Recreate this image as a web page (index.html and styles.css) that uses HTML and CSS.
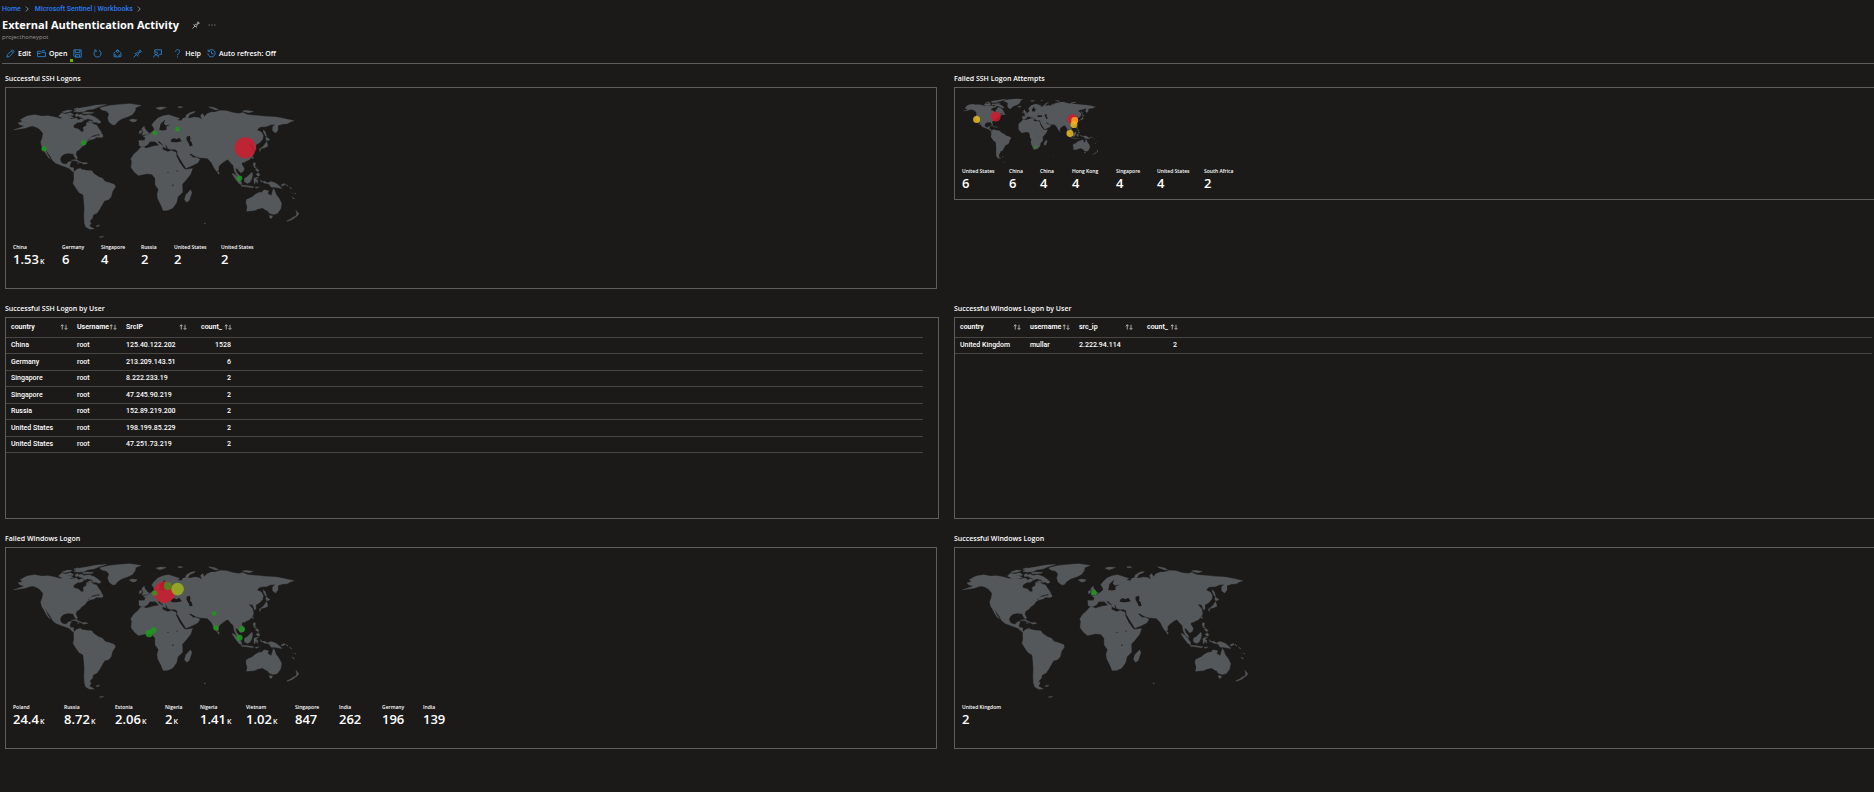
FILE: index.html
```html
<!DOCTYPE html>
<html lang="en">
<head>
<meta charset="utf-8">
<title>External Authentication Activity</title>
<link rel="stylesheet" href="styles.css">
</head>
<body>
<svg class="defs" aria-hidden="true">
  <symbol id="sort" viewBox="0 0 16 12">
    <path d="M4.500 11V1.500M1.500 4.500l3-3 3 3M12 1.500v9.500M9 8l3 3 3-3" fill="none" stroke="currentColor" stroke-width="1.600"/>
  </symbol>
  <symbol id="pin" viewBox="0 0 16 16">
    <path d="M1 15l5-5M3 7l6 6M4.500 8.500c1-1.500 2.500-2 4-1.500l3-3-.5-1.500 1-1L15 4.500l-1 1L12.500 5l-3 3c.5 1.500 0 3-1.500 4" fill="none" stroke="currentColor" stroke-width="1.500"/>
  </symbol>
  <symbol id="world" viewBox="40 50 860 410">
    <g class="land">
      <path d="M42 133L60 127 74 122 60 118 55 112 68 109 62 103 72 97 82 92 105 88 125 92 145 91 165 95 180 99 200 97 215 101 230 98 237 104 246 99 253 104 246 110 234 111 222 119 222 127 236 131 246 140 252 137 250 126 260 120 260 111 275 112 284 117 290 118 296 128 302 136 306 143 292 147 280 150 270 156 284 153 292 150 310 152 306 156 290 155 284 160 268 164 262 168 256 177 246 184 240 191 230 198 228 206 233 216 231 222 224 214 220 205 205 203 192 206 184 214 181 222 184 230 190 235 200 236 206 229 215 228 210 239 212 246 222 247 222 257 230 261 240 260 234 266 226 264 216 256 208 248 196 244 180 238 168 233 158 224 152 212 143 200 137 190 142 204 152 220 146 216 138 204 132 192 126 182 123 170 128 156 130 144 124 136 118 130 108 125 98 122 88 124 78 128 60 131z"/>
      <path d="M300 68L312 64 330 60 360 57 390 55 424 60 408 66 406 76 398 87 384 94 366 100 354 108 346 118 338 118 328 110 324 98 328 86 320 77 306 74z"/>
      <path d="M176 92l10-9 12 3 14-4 10 6-8 6 8 3-16 2-18-1zM186 80l18-6 14 1-8 4-16 3zM222 78l18-10 24-4 26-5 30-2-24 8-14 6-18 2-12 6-16 1zM232 90l12-4 8 4 16-2 16 6 12 8 8 8-6 4-10-4-6 2-4-8-14-4-10 4-8-6zM222 71l12-4 4 3-12 4zM248 82l14-2 20 1-6 3-26 1zM264 108l10-2 6 4-10 2zM296 142l12 4 2 8-10-2zM226 88l8-4 2 8-8 2z"/>
      <path d="M214 224l14-2 12 6 8 3-6 1-14-6zM246 232l14-1 4 3-14 2zM232 232l6 1-4 1zM388 104l10-3 14 2-4 5-10 2z"/>
      <path d="M222 266L226 256 232 251 242 248 246 252 264 255 276 256 282 264 296 274 308 278 316 288 330 292 344 297 347 304 338 318 334 334 327 342 314 346 308 356 300 370 292 382 280 388 278 398 270 406 274 413 269 422 284 430 270 431 258 424 254 412 253 390 254 370 252 340 250 328 238 321 229 308 220 294 223 280z"/>
      <path d="M290 420l10-1-4 4-6 0zM298 454l14-2-6 4zM612 412l5 1-2 3z"/>
      <path d="M428 184L440 188 460 182 476 180 489 182 488 192 504 199 514 195 528 200 532 214 540 230 552 246 558 252 578 249 572 266 558 284 547 296 548 320 534 334 530 352 518 368 504 374 490 375 484 360 474 340 472 326 476 312 466 298 466 278 456 266 440 265 416 270 404 260 394 246 396 228 393 220 402 206 414 196 422 186zM572 313l4 8-8 24-8 5-6-8 4-14z"/>
      <path d="M418 180L417 165 434 165 437 157 430 152 446 147 454 141 463 134 462 128 456 118 462 110 474 98 490 91 506 88 522 93 540 99 532 104 544 106 550 98 560 97 572 98 584 95 598 97 606 102 602 90 608 84 614 94 620 86 634 80 646 80 660 75 680 76 700 82 718 84 728 81 744 88 770 90 800 93 830 95 852 99 882 106 870 110 862 115 848 116 834 120 834 134 827 143 818 136 818 124 826 117 812 118 800 123 780 125 771 134 784 140 790 150 788 162 779 172 768 178 768 190 764 194 758 178 746 176 758 190 761 204 757 214 748 223 736 228 726 232 726 238 733 248 730 258 722 262 712 250 706 248 710 260 718 270 720 278 710 270 703 256 700 240 692 232 684 222 676 226 662 236 656 244 656 254 650 258 642 246 634 230 622 218 600 217 586 212 572 204 568 206 580 216 590 216 600 221 594 232 578 240 558 248 550 236 540 220 533 208 532 196 524 191 514 192 504 189 500 180 496 176 499 188 490 184 488 176 476 166 474 170 488 180 480 186 476 178 466 168 450 168 444 177 434 183 426 184z"/>
      <path d="M426 149l4-8-4-12 7-7 2 7 5 6 3 5 6 3-6 4-10 1zM418 145l1-8 6-3 1 8zM468 68l14-3 18 1-12 5-8 2zM534 64l12-1 2 3-12 1zM556 98l4-10 14-8 12-2-2 3-14 6-6 10zM626 64l16 2 14 6-8 2-16-6zM728 76l14-1 18 3-12 4-16-3z"/>
      <path d="M654 257l4 4-1 5-4-3zM732 226l5 1-3 4zM790 133l6 6 4 14-4-2-6-12zM798 154l12 8-6 4-6-2zM800 168l4 14-10 5-14 3 10-8zM778 190l5 2-3 6zM757 214l4 1-3 6z"/>
      <path d="M761 231l6 2-2 10 6 6-7-2-4-8zM766 252l6-2 6 6-6 2zM768 266l8-4 4 8-6 2zM696 264l8 2 12 12 9 12 0 8-8-4-11-14zM724 299l14 1 14 2 10 2-4 3-18-3-16-2zM734 278l8-4 14-14 2 6-2 12-6 12-8 4-9-6zM762 278l10-3 4 2-8 3 6 6-2 8-4-8-4 10-2-8zM766 305l12-1-10 5zM782 282l4 6-3 2zM786 288l8-1 8 5 12-4 14 5 10 8 8 8-14-2-8-2-10 0-8-10-12-2zM844 298l10-4 2 3-10 5zM858 296l6 5-2 1zM868 304l8 6-3 0zM876 322l3 4M876 334l8 6-4 0zM884 322l4 3-3 0z"/>
      <path d="M740 342L758 334 764 328 778 320 786 320 792 313 806 316 803 324 814 331 817 320 820 309 824 314 828 326 838 340 845 354 842 370 832 384 820 387 808 383 802 375 798 374 788 367 774 370 764 375 740 377 742 364 738 350zM808 390l10 1-3 7-5 0zM888 374l4 6 5 4-6 8-5 2 4-8zM884 392l3 2-10 8-14 5-3-1 12-6z"/>
    </g>
    <g class="sea">
      <path d="M478 134l2-8 2-10 8-8 6-6-4 12 6 6 14-3-12 6 0 10-10 2zM512 168l4-8 8-2 6 3 8-4 8 10-14 3-12 0zM560 154l10-3 2 8-2 6 6 6 2 10-8 2-4-10-6-10zM528 207l5 2 8 14 13 20 4 8-5-2-13-18zM502 260l5 0 0 2-5 0zM530 256l4 0 0 2-4 0zM517 298l4 0 0 3-4 0zM262 162l8-3 0 2zM200 88l20 4 0 1zM240 94l12 6-2 1z"/>
    </g>
  </symbol>
</svg>

<main class="page">
  <header class="header">
    <nav class="crumbs" aria-label="Breadcrumb">
      <a href="#">Home</a>
      <svg class="chevron" viewBox="0 0 8 12" aria-hidden="true"><path d="M1.500 1l5 5-5 5"/></svg>
      <a href="#">Microsoft Sentinel | Workbooks</a>
      <svg class="chevron" viewBox="0 0 8 12" aria-hidden="true"><path d="M1.500 1l5 5-5 5"/></svg>
    </nav>
    <div class="heading">
      <h1>External Authentication Activity</h1>
      <button class="plain" aria-label="Pin"><svg class="icon"><use href="#pin"/></svg></button>
      <button class="plain" aria-label="More"><svg class="icon" viewBox="0 0 16 16"><path class="dots" d="M1 8h3M6.500 8h3M12 8h3"/></svg></button>
    </div>
    <p class="subtitle">projecthoneypot</p>
  </header>

  <div class="toolbar" role="toolbar">
    <button><svg class="icon" viewBox="0 0 16 16"><path d="M1.500 14.500l1-4.500L11.500 1.500l3 3L6 13.500zM9.500 3.500l3 3"/></svg>Edit</button>
    <button><svg class="icon" viewBox="0 0 16 16"><path d="M1 13V4h6l2 2h6v7.500H1zM1 8h5l2-2M9 3h5"/></svg>Open</button>
    <button class="only saved" aria-label="Save"><svg class="icon" viewBox="0 0 16 16"><path d="M1.500 1.500h13v13h-11l-2-2zM4 1.500v5h8v-5M4.500 14.500v-4.500h7v4.500M7 12v2"/></svg></button>
    <button class="only" aria-label="Refresh"><svg class="icon" viewBox="0 0 16 16"><path d="M5 2.500A6.300 6.300 0 1 0 10.500 2.200M2 2h3.500v3.500"/></svg></button>
    <button class="only" aria-label="Share"><svg class="icon" viewBox="0 0 16 16"><path d="M5.500 4A3 3 0 0 1 11 4M4 5C2 6 1.500 8 1.800 10M12 5c2 1 2.500 3 2.200 5M5 14h6"/><circle cx="8" cy="4" r="2"/><circle cx="3.500" cy="12" r="2"/><circle cx="12.500" cy="12" r="2"/></svg></button>
    <button class="only" aria-label="Pin"><svg class="icon"><use href="#pin"/></svg></button>
    <button class="only" aria-label="Feedback"><svg class="icon" viewBox="0 0 16 16"><path d="M3 5V1.500h12v8h-3l-3 2.500M1.500 15c0-3 2-4.500 4-4.500s4 1.500 4 4.500"/><circle cx="5.500" cy="7.500" r="2.500"/></svg></button>
    <button><svg class="icon" viewBox="0 0 16 16"><path d="M4.500 5c0-5 7.500-5 7.500-.5 0 3-4 3-4 6.500M8 13v2"/></svg>Help</button>
    <button><svg class="icon" viewBox="0 0 16 16"><path d="M2.500 4A6.500 6.500 0 1 1 1.500 8M2 1v3.500h3.500M8 4v4.500h3.500"/></svg>Auto refresh: Off</button>
  </div>

  <div class="workbook">
    <section>
      <h2>Successful SSH Logons</h2>
      <div class="panel">
        <svg class="map" viewBox="40 50 860 410" role="img" aria-label="World map">
          <use href="#world" x="40" y="50" width="860" height="410"/>
          <circle class="red" cx="736" cy="187" r="32"/>
          <circle class="green" cx="133" cy="190" r="8"/><circle class="green" cx="252" cy="172" r="8"/>
          <circle class="green" cx="465" cy="143" r="7"/><circle class="green" cx="533" cy="131" r="7"/><circle class="green" cx="719" cy="278" r="8"/>
        </svg>
        <dl class="stats ssh-ok">
          <div><dt>China</dt><dd>1.53<small>K</small></dd></div>
          <div><dt>Germany</dt><dd>6</dd></div>
          <div><dt>Singapore</dt><dd>4</dd></div>
          <div><dt>Russia</dt><dd>2</dd></div>
          <div><dt>United States</dt><dd>2</dd></div>
          <div><dt>United States</dt><dd>2</dd></div>
        </dl>
      </div>
    </section>

    <section>
      <h2>Failed SSH Logon Attempts</h2>
      <div class="panel compact">
        <svg class="map" viewBox="40 50 860 410" role="img" aria-label="World map">
          <use href="#world" x="40" y="50" width="860" height="410"/>
          <circle class="red" cx="250" cy="167" r="32"/><circle class="red" cx="734" cy="184" r="32"/>
          <circle class="yellow" cx="130" cy="186" r="22"/><circle class="orange" cx="749" cy="192" r="22"/>
          <circle class="yellow" cx="744" cy="218" r="22"/><circle class="yellow" cx="719" cy="274" r="22"/>
          <circle class="green" cx="501" cy="358" r="8"/>
        </svg>
        <dl class="stats ssh-failed">
          <div><dt>United States</dt><dd>6</dd></div>
          <div><dt>China</dt><dd>6</dd></div>
          <div><dt>China</dt><dd>4</dd></div>
          <div><dt>Hong Kong</dt><dd>4</dd></div>
          <div><dt>Singapore</dt><dd>4</dd></div>
          <div><dt>United States</dt><dd>4</dd></div>
          <div><dt>South Africa</dt><dd>2</dd></div>
        </dl>
      </div>
    </section>

    <section>
      <h2>Successful SSH Logon by User</h2>
      <div class="panel grid-panel">
        <table>
          <colgroup><col class="c66"><col class="c49"><col class="c70"><col class="c45"><col></colgroup>
          <thead><tr>
            <th><span>country<svg class="sort"><use href="#sort"/></svg></span></th>
            <th><span>Username<svg class="sort"><use href="#sort"/></svg></span></th>
            <th><span>SrcIP<svg class="sort"><use href="#sort"/></svg></span></th>
            <th class="num"><span>count_<svg class="sort"><use href="#sort"/></svg></span></th><td></td>
          </tr></thead>
          <tbody>
            <tr><td>China</td><td>root</td><td>125.40.122.202</td><td class="num">1528</td><td></td></tr>
            <tr><td>Germany</td><td>root</td><td>213.209.143.51</td><td class="num">6</td><td></td></tr>
            <tr><td>Singapore</td><td>root</td><td>8.222.233.19</td><td class="num">2</td><td></td></tr>
            <tr><td>Singapore</td><td>root</td><td>47.245.90.219</td><td class="num">2</td><td></td></tr>
            <tr><td>Russia</td><td>root</td><td>152.89.219.200</td><td class="num">2</td><td></td></tr>
            <tr><td>United States</td><td>root</td><td>198.199.85.229</td><td class="num">2</td><td></td></tr>
            <tr><td>United States</td><td>root</td><td>47.251.73.219</td><td class="num">2</td><td></td></tr>
          </tbody>
        </table>
      </div>
    </section>

    <section>
      <h2>Successful Windows Logon by User</h2>
      <div class="panel grid-panel">
        <table>
          <colgroup><col class="c70"><col class="c49"><col class="c63"><col class="c45"><col></colgroup>
          <thead><tr>
            <th><span>country<svg class="sort"><use href="#sort"/></svg></span></th>
            <th><span>username<svg class="sort"><use href="#sort"/></svg></span></th>
            <th><span>src_ip<svg class="sort"><use href="#sort"/></svg></span></th>
            <th class="num"><span>count_<svg class="sort"><use href="#sort"/></svg></span></th><td></td>
          </tr></thead>
          <tbody>
            <tr><td>United Kingdom</td><td>mullar</td><td>2.222.94.114</td><td class="num">2</td><td></td></tr>
          </tbody>
        </table>
      </div>
    </section>

    <section>
      <h2>Failed Windows Logon</h2>
      <div class="panel">
        <svg class="map" viewBox="40 50 860 410" role="img" aria-label="World map">
          <use href="#world" x="40" y="50" width="860" height="410"/>
          <circle class="red" cx="494" cy="140" r="32"/><circle class="olive" cx="533" cy="131" r="19"/>
          <circle class="moss" cx="504" cy="122" r="12"/><circle class="moss" cx="465" cy="143" r="8"/>
          <circle class="green" cx="448" cy="264" r="11"/><circle class="green" cx="461" cy="254" r="9"/>
          <circle class="green" cx="643" cy="204" r="7"/><circle class="green" cx="648" cy="247" r="8"/>
          <circle class="green" cx="726" cy="251" r="9"/><circle class="green" cx="719" cy="277" r="9"/>
        </svg>
        <dl class="stats win-failed">
          <div><dt>Poland</dt><dd>24.4<small>K</small></dd></div>
          <div><dt>Russia</dt><dd>8.72<small>K</small></dd></div>
          <div><dt>Estonia</dt><dd>2.06<small>K</small></dd></div>
          <div><dt>Nigeria</dt><dd>2<small>K</small></dd></div>
          <div><dt>Nigeria</dt><dd>1.41<small>K</small></dd></div>
          <div><dt>Vietnam</dt><dd>1.02<small>K</small></dd></div>
          <div><dt>Singapore</dt><dd>847</dd></div>
          <div><dt>India</dt><dd>262</dd></div>
          <div><dt>Germany</dt><dd>196</dd></div>
          <div><dt>India</dt><dd>139</dd></div>
        </dl>
      </div>
    </section>

    <section>
      <h2>Successful Windows Logon</h2>
      <div class="panel">
        <svg class="map" viewBox="40 50 860 410" role="img" aria-label="World map">
          <use href="#world" x="40" y="50" width="860" height="410"/>
          <circle class="green" cx="435" cy="142" r="8"/>
        </svg>
        <dl class="stats">
          <div><dt>United Kingdom</dt><dd>2</dd></div>
        </dl>
      </div>
    </section>
  </div>
</main>
</body>
</html>
```

FILE: styles.css
```css
* { box-sizing: border-box; }

body {
  margin: 0;
  background: #1b1a19;
  color: #fff;
  font: 7px/10px "Open Sans", "Noto Sans", sans-serif;
}

.defs { position: absolute; width: 0; height: 0; }

.page { min-height: 100vh; overflow-x: clip; }

h1, h2, p, dl, dd { margin: 0; }

.header { padding: 4px 2px 0; }

.crumbs { display: flex; align-items: center; gap: 4px; height: 10px; font-family: Roboto, "Open Sans", sans-serif; }
.crumbs a { color: #2b7cf0; font-weight: 500; text-decoration: none; }
.chevron { width: 4px; height: 6px; margin-right: 2px; fill: none; stroke: #8a8886; stroke-width: 2; }

.heading { display: flex; align-items: center; height: 18px; margin-top: 2px; }
h1 { margin-right: 13px; font-size: 11px; line-height: 18px; font-weight: 700; white-space: nowrap; }

button {
  display: flex;
  align-items: center;
  gap: 3px;
  padding: 0;
  border: 0;
  background: none;
  color: inherit;
  font: inherit;
  font-weight: 600;
  white-space: nowrap;
}
.plain { margin-right: 8px; color: #d2d0ce; }
.icon { flex: none; width: 9px; height: 9px; fill: none; stroke: currentColor; stroke-width: 1.5; overflow: visible; }
.plain .icon { width: 8px; height: 8px; }
.dots { stroke: #8a8886; }

.subtitle { color: #979593; font-size: 6px; line-height: 6px; }

.toolbar {
  display: flex;
  align-items: center;
  gap: 6px;
  height: 24px;
  margin-left: 2px;
  padding: 6px 4px 2px;
  border-bottom: 1px solid #605e5c;
}
.toolbar .icon { color: #2b88d8; }
.only { position: relative; margin-right: 5px; }
.saved::before {
  content: "";
  position: absolute;
  left: -3px;
  bottom: -4px;
  width: 3px;
  height: 3px;
  background: #6bb700;
}

/* The canvas is a little wider than the window; its right edge is clipped. */
.workbook {
  display: grid;
  grid-template-columns: minmax(0, 1fr) minmax(0, 1fr);
  gap: 12px 15px;
  margin: 7px -14px 0 5px;
}

h2 { font-size: 7px; line-height: 16px; font-weight: 600; }

.panel {
  min-height: 202px;
  margin-right: 2px;
  padding: 14px 7px 8px;
  border: 1px solid #605e5c;
}
.grid-panel { margin-right: 0; padding: 0 15px 0 0; }
.compact { min-height: 112px; padding-top: 10px; }

.map { display: block; width: 287px; height: 137px; }
.compact .map { width: 137px; height: 65px; }
.land { fill: #55585b; stroke: #55585b; stroke-width: 1; }
.sea { fill: #1b1a19; }
.red { fill: #d01c2e; opacity: .85; }
.green { fill: #1f961f; opacity: .9; }
.yellow { fill: #e8bc1c; opacity: .85; }
.orange { fill: #ff9e1c; opacity: .9; }
.olive { fill: #9aac22; opacity: .9; }
.moss { fill: #4a8a1e; opacity: .9; }

.stats { display: grid; margin-top: 4px; white-space: nowrap; }
dt { font-size: 5px; line-height: 8px; font-weight: 600; }
dd { font-size: 13px; line-height: 16px; font-weight: 600; }
dd small { margin-left: 1px; font-size: 7px; }
.ssh-ok { grid-template-columns: 49px 39px 40px 33px 47px 47px; }
.ssh-failed { grid-template-columns: 47px 31px 32px 44px 41px 47px 47px; }
.win-failed { grid-template-columns: 51px 51px 50px 35px 46px 49px 44px 43px 41px 47px; }

table { width: 100%; border-collapse: collapse; table-layout: fixed; font-family: Roboto, "Open Sans", sans-serif; }
col.c45 { width: 45px; }
col.c49 { width: 49px; }
col.c63 { width: 63px; }
col.c66 { width: 66px; }
col.c70 { width: 70px; }
th, td {
  height: 16px;
  padding: 0 5px;
  border-bottom: 1px solid #484644;
  line-height: 10px;
  font-weight: 500;
  text-align: left;
  white-space: nowrap;
}
thead th { height: 19px; padding-right: 4px; font-weight: 600; }
th span { display: flex; align-items: center; justify-content: space-between; }
tbody tr:nth-child(even) td { height: 17px; }
.num { text-align: right; }
.sort { flex: none; width: 8px; height: 6px; color: #c8c6c4; }
th.num { padding-left: 10px; }
```
